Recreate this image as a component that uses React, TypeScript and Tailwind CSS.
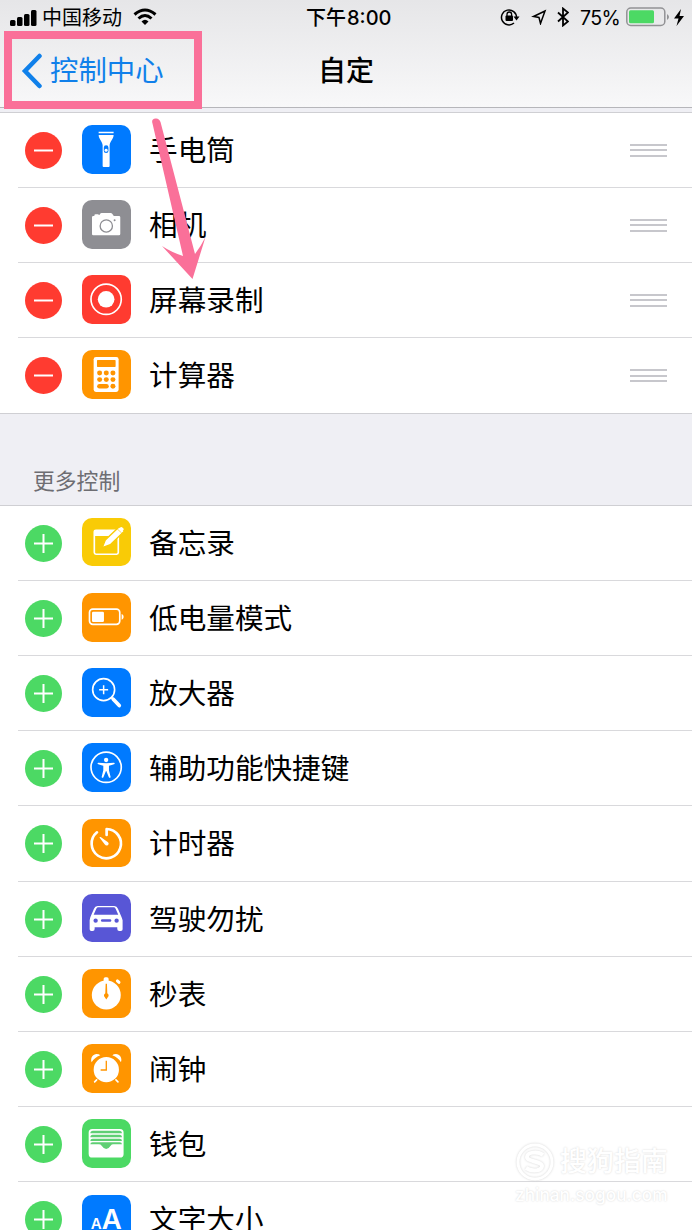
import React from 'react';

type Control = {
  name: string;
  color: string;
  icon: React.ReactNode;
};

const Glyph: React.FC<{ children: React.ReactNode }> = ({ children }) => (
  <svg viewBox="0 0 146 146" className="w-full h-full" fill="none">
    {children}
  </svg>
);

const included: Control[] = [
  {
    name: '手电筒',
    color: 'bg-[#007aff]',
    icon: (
      <Glyph>
        <path d="M50 20h45v5H50z" fill="#fff" />
        <path d="M50 30h45c0 13-12 19-12 31v62q0 3-3 3H65q-3 0-3-3V61c0-12-12-18-12-31z" fill="#fff" />
        <rect x="65.500" y="61" width="14" height="23" rx="7" fill="#007aff" />
        <circle cx="72.500" cy="76" r="4.500" fill="#fff" />
      </Glyph>
    ),
  },
  {
    name: '相机',
    color: 'bg-[#8e8e93]',
    icon: (
      <Glyph>
        <path
          d="M34 48h3v-1q0-4 4-4h6q4 0 4 3c3-1 3-7 8-7h28c5 0 5 8 10 9h14q4 0 4 4v50q0 4-4 4H34q-4 0-4-4V52q0-4 4-4z"
          fill="#fff"
        />
        <circle cx="73" cy="78" r="18.500" stroke="#8e8e93" strokeWidth="4" />
        <circle cx="98" cy="61" r="3" fill="#8e8e93" />
      </Glyph>
    ),
  },
  {
    name: '屏幕录制',
    color: 'bg-[#ff3b30]',
    icon: (
      <Glyph>
        <circle cx="72.500" cy="73" r="45.500" stroke="#fff" strokeWidth="5" />
        <circle cx="72.500" cy="73" r="25" fill="#fff" />
      </Glyph>
    ),
  },
  {
    name: '计算器',
    color: 'bg-[#ff9500]',
    icon: (
      <Glyph>
        <rect x="35" y="21" width="75" height="105" rx="7" fill="#fff" />
        <g fill="#ff9500">
          <rect x="45" y="30" width="56" height="21" rx="2" />
          <circle cx="53" cy="69" r="7.500" />
          <circle cx="73" cy="69" r="7.500" />
          <circle cx="93" cy="69" r="7.500" />
          <circle cx="53" cy="89" r="7.500" />
          <circle cx="73" cy="89" r="7.500" />
          <circle cx="93" cy="89" r="7.500" />
          <rect x="45.500" y="102" width="35" height="14" rx="7" />
          <circle cx="93" cy="109" r="7.500" />
        </g>
      </Glyph>
    ),
  },
];

const more: Control[] = [
  {
    name: '备忘录',
    color: 'bg-[#f9cb06]',
    icon: (
      <Glyph>
        <rect x="37" y="37" width="72" height="72" rx="5" stroke="#fff" strokeWidth="5" />
        <path d="M36 36h74v18H36z" fill="#fff" />
        <path d="M61 89l9-23 42-40 15 14-42 40z" fill="#fff" stroke="#f9cb06" strokeWidth="4" />
        <path d="M112 31l4-3q3-2 6 1l2 2q3 3 0 6l-4 4z" fill="#fff" />
        <path d="M106 33l13 12" stroke="#f9cb06" strokeWidth="2" />
      </Glyph>
    ),
  },
  {
    name: '低电量模式',
    color: 'bg-[#ff9500]',
    icon: (
      <Glyph>
        <rect x="22.500" y="48.500" width="91" height="46" rx="10" stroke="#fff" strokeWidth="5" />
        <rect x="30" y="56" width="36" height="31" rx="4" fill="#fff" />
        <path d="M119 63c8 2 8 15 0 17z" fill="#fff" />
      </Glyph>
    ),
  },
  {
    name: '放大器',
    color: 'bg-[#007aff]',
    icon: (
      <Glyph>
        <circle cx="65" cy="65" r="33" stroke="#fff" strokeWidth="5" />
        <path d="M65 52v27M51.500 65.500h27" stroke="#fff" strokeWidth="4.500" />
        <path d="M88 88l5 5" stroke="#fff" strokeWidth="6" />
        <path d="M94 94l18 19" stroke="#fff" strokeWidth="11" strokeLinecap="round" />
      </Glyph>
    ),
  },
  {
    name: '辅助功能快捷键',
    color: 'bg-[#007aff]',
    icon: (
      <Glyph>
        <circle cx="72.500" cy="73" r="45.500" stroke="#fff" strokeWidth="5" />
        <circle cx="72.500" cy="51" r="6.500" fill="#fff" />
        <path
          d="M49 59q-3 0-2 4 9 4 17 5v14l-5 20q1 4 5 2l8-20h1l8 20q4 2 5-2l-5-20V68q8-1 17-5 1-4-2-4-23 3-47 0z"
          fill="#fff"
        />
      </Glyph>
    ),
  },
  {
    name: '计时器',
    color: 'bg-[#ff9500]',
    icon: (
      <Glyph>
        <path
          d="M45 40A44 44 0 1 0 74 30V48"
          stroke="#fff"
          strokeWidth="8"
          strokeLinecap="round"
          strokeLinejoin="round"
        />
        <path d="M53 56q-1-3 3-2l20 14q7 5 2 10-5 4-10-2z" fill="#fff" />
      </Glyph>
    ),
  },
  {
    name: '驾驶勿扰',
    color: 'bg-[#5856d6]',
    icon: (
      <Glyph>
        <path
          fillRule="evenodd"
          d="M25 70l11-26q3-8 11-8h50q8 0 11 8l11 26 3 9v27q0 5-5 5h-5q-6 0-6-6v-5H38v5q0 6-6 6h-4q-5 0-5-5V79zM35 62h74l-8-18q-2-4-6-4H49q-4 0-6 4z"
          fill="#fff"
        />
        <g fill="#5856d6">
          <circle cx="41" cy="80" r="6.500" />
          <circle cx="104" cy="80" r="6.500" />
          <rect x="57" y="76" width="31" height="7" rx="3.500" />
        </g>
      </Glyph>
    ),
  },
  {
    name: '秒表',
    color: 'bg-[#ff9500]',
    icon: (
      <Glyph>
        <circle cx="73" cy="78" r="43.500" fill="#fff" />
        <rect x="65" y="25" width="15" height="16" rx="5" fill="#fff" />
        <rect x="101" y="33" width="15" height="9" rx="4" transform="rotate(43 108 38)" fill="#fff" />
        <path d="M71 44h4l1 29q5 3 4 8l-7 11-7-11q-1-5 4-8z" fill="#ff9500" />
      </Glyph>
    ),
  },
  {
    name: '闹钟',
    color: 'bg-[#ff9500]',
    icon: (
      <Glyph>
        <circle cx="73" cy="77" r="38" fill="#fff" />
        <path d="M29 55C24 42 33 30 44 30q7 0 11 4Q37 41 29 55z" fill="#fff" />
        <path d="M117 55c5-13-4-25-15-25q-7 0-11 4 18 7 26 21z" fill="#fff" />
        <path d="M44 108l-6 6M102 108l6 6" stroke="#fff" strokeWidth="5" strokeLinecap="round" />
        <path d="M73 50v28H56" stroke="#ff9500" strokeWidth="4" />
      </Glyph>
    ),
  },
  {
    name: '钱包',
    color: 'bg-[#4cd964]',
    icon: (
      <Glyph>
        <rect x="20" y="30" width="105" height="86" rx="11" fill="#fff" />
        <g fill="#5fcf74">
          <path d="M25 43q0-8 8-8h79q8 0 8 8H25z" />
          <path d="M25 55q0-8 7-8h81q7 0 7 8H25z" />
          <path d="M25 66q0-7 7-7h81q7 0 7 7H25z" />
          <path d="M25 76q0-6 7-6h81q7 0 7 6H94q-5 0-8 4-13 20-27 0-3-4-8-4H25z" />
        </g>
      </Glyph>
    ),
  },
  {
    name: '文字大小',
    color: 'bg-[#007aff]',
    icon: (
      <div className="flex items-baseline justify-center pt-[4px] text-white font-semibold leading-[40px] font-[Inter,sans-serif]">
        <span className="text-[15px]">A</span>
        <span className="text-[27.500px]">A</span>
      </div>
    ),
  },
];

const ControlRow: React.FC<{ control: Control; added?: boolean; last?: boolean }> = ({ control, added, last }) => (
  <li className={`flex shrink-0 pl-[18px] ${added ? 'h-[74.9px]' : 'h-[75.2px]'}`}>
    <div className={`flex flex-1 items-center pl-[7px] pr-[25px] ${last ? '' : 'border-b border-[#d9d9dc]'}`}>
      <svg viewBox="0 0 37 37" className={`w-[37px] h-[37px] mt-px shrink-0 ${added ? 'text-[#ff3b30]' : 'text-[#4cd964]'}`}>
        <circle cx="18.500" cy="18.500" r="18.500" fill="currentColor" />
        <path d={added ? 'M9 18.500h19' : 'M9 18.500h19M18.500 9v19'} stroke="#fff" strokeWidth="2" />
      </svg>
      <div className={`w-[48.6px] h-[48.6px] ml-5 mb-px shrink-0 rounded-[10px] overflow-hidden ${control.color}`}>
        {control.icon}
      </div>
      <span className="ml-[18.500px] mt-[2px] flex-1 text-[28.6px] leading-[40px] text-black">{control.name}</span>
      {added && (
        <div className="flex flex-col gap-[3.500px] mt-px">
          <span className="w-[37px] h-[2px] bg-[#c7c7cc]" />
          <span className="w-[37px] h-[2px] bg-[#c7c7cc]" />
          <span className="w-[37px] h-[2px] bg-[#c7c7cc]" />
        </div>
      )}
    </div>
  </li>
);

const StatusBar: React.FC = () => (
  <div className="relative flex h-[35px] items-center justify-between pl-[10px] pr-[8px] text-[20px] leading-[34px] text-black">
    <div className="flex items-center">
      <svg viewBox="0 0 27 18" className="w-[27px] h-[18px]">
        <rect x="0" y="11" width="5.500" height="6" rx="1.500" />
        <rect x="7" y="8" width="5.500" height="9" rx="1.500" />
        <rect x="14" y="5" width="5.500" height="12" rx="1.500" />
        <rect x="21" y="1" width="5.500" height="16" rx="1.500" />
      </svg>
      <span className="ml-[5px] mt-px">中国移动</span>
      <svg viewBox="0 0 24 18" className="w-[24px] h-[18px] ml-[11px] mb-px" fill="none" stroke="#000" strokeWidth="3">
        <path d="M1.500 6.500Q12-2.500 22.500 6.500" />
        <path d="M5.500 10.500Q12 4.500 18.500 10.500" />
        <path d="M8.500 13.500q3.500-3.500 7 0L12 17z" fill="#000" stroke="none" />
      </svg>
    </div>
    <span className="absolute left-[306px] top-px font-medium">下午<span className="ml-px">8:00</span></span>
    <div className="flex items-center">
      <svg viewBox="0 0 20 18" className="w-[20px] h-[18px] mb-px" fill="none">
        <path d="M14 15A7.500 7.500 0 1 1 16.500 9.500" stroke="#000" strokeWidth="1.500" />
        <path d="M13.500 8.500h6l-3 4z" fill="#000" />
        <rect x="5.500" y="7.500" width="7.500" height="5.500" rx="1" fill="#000" />
        <path d="M7 8V6.300a2.300 2.300 0 0 1 4.600 0V8" stroke="#000" strokeWidth="1.300" />
      </svg>
      <svg viewBox="0 0 16 16" className="w-[16px] h-[16px] ml-[11px] mb-px" fill="none" stroke="#000" strokeWidth="1.500">
        <path d="M14 2L2.500 7.500 8 8.500l1.500 6z" />
      </svg>
      <svg viewBox="0 0 12 20" className="w-[12px] h-[20px] ml-[10px] mb-px" fill="none" stroke="#000" strokeWidth="1.800">
        <path d="M1 5.500l10 9L6 18.500v-17l5 4-10 9" />
      </svg>
      <span className="ml-[11px] text-[19.600px] tracking-[-0.7px]">75%</span>
      <svg viewBox="0 0 44 20" className="w-[44px] h-[20px] ml-[6px] mb-px">
        <rect x="0.800" y="1" width="38" height="17.500" rx="4" fill="none" stroke="#929295" strokeWidth="1.500" />
        <rect x="3" y="3.300" width="25" height="13" rx="1.500" fill="#4cd964" />
        <path d="M41 7q4 3 0 6z" fill="#929295" />
      </svg>
      <svg viewBox="0 0 10 17" className="w-[10px] h-[17px] ml-[4px] mb-px">
        <path d="M7 0L0 9.500h4.500L2.500 17 10 7H5.500z" />
      </svg>
    </div>
  </div>
);

const App: React.FC = () => {
  return (
    <div className="relative flex flex-col w-[692px] h-[1230px] overflow-hidden bg-[#efeff4] font-[Inter,'Noto_Sans_CJK_SC',sans-serif]">
      {/* Header */}
      <header className="h-[108px] shrink-0 bg-linear-to-b from-[#e6e6e8] to-[#f8f8f9] border-b border-[#b6b6ba]">
        <StatusBar />
        <div className="flex h-[72px] items-center text-[28.4px] leading-[40px]">
          <button className="flex w-[318px] items-center pl-[21px] text-[#1080ea]">
            <svg viewBox="0 0 21 36" className="w-[21px] h-[36px]" fill="none" stroke="currentColor" strokeWidth="4.500">
              <path d="M18.500 3L4 18l14.500 15" strokeLinecap="round" strokeLinejoin="miter" />
            </svg>
            <span className="ml-[8px]">控制中心</span>
          </button>
          <h1 className="font-medium text-black text-[28px]">自定</h1>
        </div>
      </header>

      {/* Included controls */}
      <ul className="mt-[4px] shrink-0 bg-white border-y border-[#cfcfd3]">
        {included.map((control, i) => (
          <ControlRow key={control.name} control={control} added last={i === included.length - 1} />
        ))}
      </ul>

      <h2 className="flex h-[91px] shrink-0 items-end pl-[33px] pb-[8px] text-[21.800px] leading-[32px] text-[#6d6d72]">更多控制</h2>

      {/* More controls */}
      <ul className="flex flex-col shrink-0 bg-white border-t border-[#cfcfd3]">
        {more.map((control) => (
          <ControlRow key={control.name} control={control} />
        ))}
      </ul>

      {/* Watermark */}
      <div className="absolute left-[515px] top-[1142px] text-white [text-shadow:0_0_2px_#d4d4d4]">
        <div className="flex items-center">
          <svg viewBox="0 0 40 40" className="w-[40px] h-[40px] drop-shadow-[0_0_1px_#d4d4d4]" fill="none" stroke="#fff">
            <circle cx="20" cy="20" r="17" strokeWidth="3" />
            <path d="M28 13c-5-4-16-3-16 2s15 4 15 9-10 6-16 2" strokeWidth="4" />
          </svg>
          <span className="ml-[5px] text-[27px] leading-[40px] font-medium">搜狗指南</span>
        </div>
        <div className="text-[17.300px] leading-[26px] font-medium">zhinan.sogou.com</div>
      </div>

      {/* Annotations */}
      <div className="absolute left-[4px] top-[31px] w-[198px] h-[78px] border-[8px] border-[#fa7099]" />
      <svg viewBox="0 0 60 170" className="absolute left-[150px] top-[115px] w-[60px] h-[170px]" fill="#fa7099">
        <path d="M2.500 8.500Q1 4 5.500 3.500 9 3 10.500 7L45 139q6-8 10.500-17L42.500 164 12 131q9 6 21 10z" />
      </svg>
    </div>
  );
};

export default App;
